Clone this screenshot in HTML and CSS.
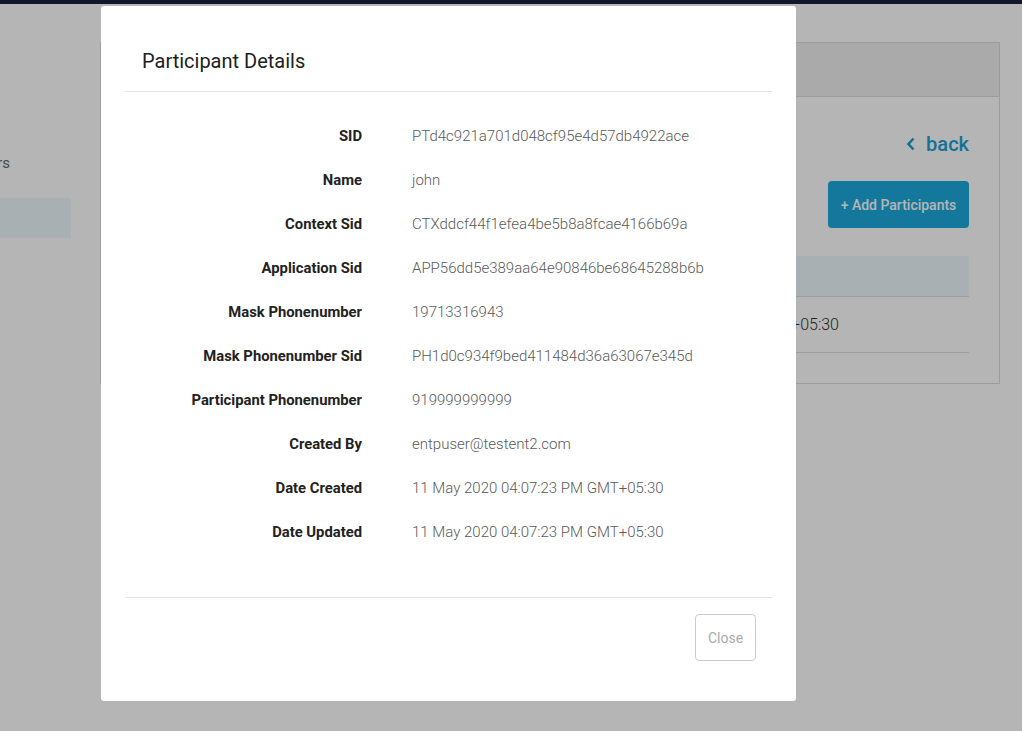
FILE: index.html
```html
<!DOCTYPE html>
<html>
<head>
<meta charset="utf-8">
<link rel="stylesheet" href="styles.css">
</head>
<body>
<div class="navbar"></div>
<div class="layout">
  <aside class="sidebar">
    <div class="side-item">Users</div>
    <div class="side-item active"></div>
  </aside>
  <main class="main">
    <section class="card">
      <div class="card-header"></div>
      <div class="card-body">
        <div class="back-row"><a class="back"><svg class="chev" viewBox="0 0 10 14" width="10" height="14"><path d="M7.5 1.5 L2.5 7 L7.5 12.5" fill="none" stroke="currentColor" stroke-width="2.6"/></svg>back</a></div>
        <div class="btn-row"><button class="add-btn">+ Add Participants</button></div>
        <div class="table-head"></div>
        <div class="table-row">11 May 2020 04:07:23 PM GMT+05:30</div>
      </div>
    </section>
  </main>
</div>
<div class="backdrop"></div>
<div class="modal">
  <div class="modal-header"><h4 class="modal-title">Participant Details</h4></div>
  <div class="modal-body">
    <div class="row"><div class="label">SID</div><div class="value">PTd4c921a701d048cf95e4d57db4922ace</div></div>
    <div class="row"><div class="label">Name</div><div class="value">john</div></div>
    <div class="row"><div class="label">Context Sid</div><div class="value">CTXddcf44f1efea4be5b8a8fcae4166b69a</div></div>
    <div class="row"><div class="label">Application Sid</div><div class="value">APP56dd5e389aa64e90846be68645288b6b</div></div>
    <div class="row"><div class="label">Mask Phonenumber</div><div class="value">19713316943</div></div>
    <div class="row"><div class="label">Mask Phonenumber Sid</div><div class="value">PH1d0c934f9bed411484d36a63067e345d</div></div>
    <div class="row"><div class="label">Participant Phonenumber</div><div class="value">919999999999</div></div>
    <div class="row"><div class="label">Created By</div><div class="value">entpuser@testent2.com</div></div>
    <div class="row"><div class="label">Date Created</div><div class="value">11 May 2020 04:07:23 PM GMT+05:30</div></div>
    <div class="row"><div class="label">Date Updated</div><div class="value">11 May 2020 04:07:23 PM GMT+05:30</div></div>
  </div>
  <div class="modal-footer"><button class="close-btn">Close</button></div>
</div>
</body>
</html>
```
FILE: styles.css
```css
html, body {
  margin: 0;
  padding: 0;
}
body {
  font-family: Roboto, "Liberation Sans", sans-serif;
  background: #ffffff;
  width: 1022px;
  height: 731px;
  overflow: hidden;
}
.navbar {
  height: 4px;
  background: #17223a;
}
.layout {
  display: flex;
}
.sidebar {
  width: 71px;
  flex: none;
  overflow: hidden;
  padding-top: 139px;
}
.side-item {
  display: flex;
  justify-content: flex-end;
  white-space: nowrap;
  height: 40px;
  align-items: center;
  padding-right: 61px;
  font-size: 15px;
  color: #666;
}
.side-item.active {
  background: #edf8fc;
  margin-top: 15px;
}
.main {
  flex: 1;
  padding: 38px 22px 0 29px;
}
.card {
  border: 1px solid #dcdcdc;
  height: 340px;
}
.card-header {
  height: 53px;
  background: #f0f0f0;
  border-bottom: 1px solid #dcdcdc;
}
.card-body {
  padding: 0 30px 0 30px;
}
.back-row {
  display: flex;
  justify-content: flex-end;
  padding-top: 32px;
  height: 30px;
}
.back {
  display: flex;
  align-items: center;
  gap: 10px;
  color: #1d9fd3;
  font-size: 20px;
  font-weight: 500;
}
.chev {
  display: block;
}
.btn-row {
  display: flex;
  justify-content: flex-end;
  margin-top: 22px;
}
.add-btn {
  height: 47px;
  width: 141px;
  border: none;
  border-radius: 4px;
  background: #1ca9dc;
  color: #ffffff;
  font-family: Roboto, "Liberation Sans", sans-serif;
  font-size: 14px;
  font-weight: 500;
  padding: 0;
}
.table-head {
  margin-top: 28px;
  height: 40px;
  background: #edf8fc;
  border-bottom: 1px solid #e0e0e0;
}
.table-row {
  height: 55px;
  border-bottom: 1px solid #e0e0e0;
  display: flex;
  align-items: center;
  justify-content: flex-end;
  font-size: 16px;
  font-weight: 300;
  color: #333;
  padding-right: 130px;
}
.backdrop {
  position: fixed;
  inset: 0;
  background: rgba(0, 0, 0, 0.29);
}
.modal {
  position: absolute;
  left: 101px;
  top: 6px;
  width: 695px;
  height: 695px;
  background: #ffffff;
  border-radius: 3px;
  box-sizing: border-box;
  padding: 0 24px;
  display: flex;
  flex-direction: column;
}
.modal-header {
  height: 86px;
  border-bottom: 1px solid #e3e3e8;
  display: flex;
  align-items: center;
  padding: 0 17px;
  box-sizing: border-box;
}
.modal-title {
  margin: 0;
  padding-top: 24px;
  font-size: 20px;
  font-weight: 400;
  color: #212121;
}
.modal-body {
  padding: 22px 0 43px 0;
}
.row {
  display: grid;
  grid-template-columns: 237px 1fr;
  column-gap: 50px;
  height: 44px;
  align-items: center;
  font-size: 15px;
}
.label {
  text-align: right;
  font-weight: 700;
  font-size: 14.8px;
  color: #222222;
}
.value {
  font-weight: 300;
  color: #5a5a5a;
}
.modal-footer {
  border-top: 1px solid #e3e3e3;
  display: flex;
  justify-content: flex-end;
  padding: 16px 16px 0 0;
}
.close-btn {
  width: 61px;
  height: 47px;
  border: 1px solid #cccccc;
  border-radius: 4px;
  background: #ffffff;
  color: #aaaaaa;
  font-family: Roboto, "Liberation Sans", sans-serif;
  font-size: 14px;
  padding: 0;
}
```
